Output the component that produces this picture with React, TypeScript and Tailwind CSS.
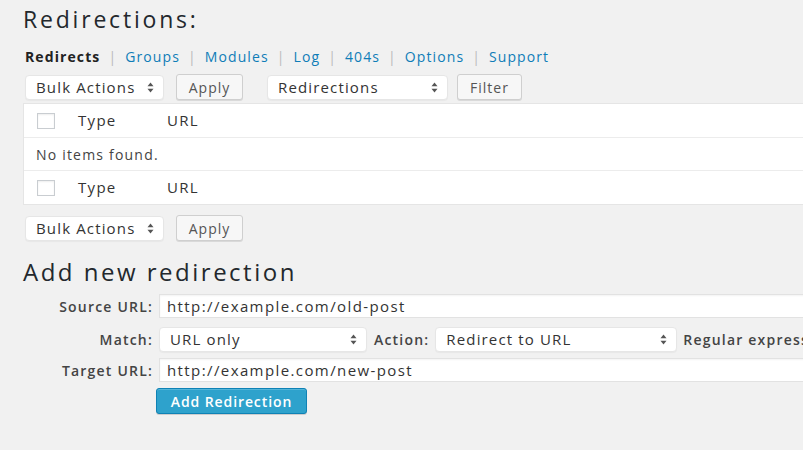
import React from 'react';

const font = { fontFamily: '"Open Sans", "Liberation Sans", sans-serif' };

function Arrows() {
    return (
        <svg width="7" height="11" viewBox="0 0 7 11" className="shrink-0">
            <path d="M3.5 0.5 L6.5 4.3 L0.5 4.3 Z" fill="#555" />
            <path d="M3.5 10.5 L6.5 6.7 L0.5 6.7 Z" fill="#555" />
        </svg>
    );
}

function FakeSelect({ label, className }: { label: string; className: string }) {
    return (
        <div className={`flex items-center justify-between h-[25px] bg-white rounded-[4px] border border-[#e6e6e6] shadow-[0_1px_1px_rgba(0,0,0,0.04)] pl-[10px] pr-[9px] text-[15px] tracking-[1.15px] text-[#333] ${className}`}>
            <span className="truncate">{label}</span>
            <Arrows />
        </div>
    );
}

function Btn({ label, className }: { label: string; className: string }) {
    return (
        <div className={`flex items-center justify-center h-[26px] bg-[#f7f7f7] border border-[#cfcfcf] rounded-[3px] shadow-[0_1px_0_#d9d9d9] text-[14px] tracking-[1px] text-[#555] ${className}`}>
            {label}
        </div>
    );
}

function HeaderRow() {
    return (
        <div className="flex items-center h-[33px] text-[15px] tracking-[1.3px] text-[#333]">
            <div className="ml-[13px] w-[18px] h-[16px] bg-white border border-[#c9cdd1] shadow-[inset_0_1px_2px_rgba(0,0,0,0.07)]" />
            <span className="ml-[23px] w-[89px]">Type</span>
            <span>URL</span>
        </div>
    );
}

function Input({ value }: { value: string }) {
    return (
        <div className="flex-1 flex items-center h-[24px] bg-white border border-[#e2e2e2] pl-[7px] text-[15px] tracking-[1.4px] text-[#333] shadow-[inset_0_1px_2px_rgba(0,0,0,0.05)]">
            {value}
        </div>
    );
}

export default function App() {
    const tabs = ['Groups', 'Modules', 'Log', '404s', 'Options', 'Support'];
    return (
        <div className="w-[803px] h-[450px] overflow-hidden bg-[#f1f1f1] text-[#333]" style={font}>
            <div className="w-[900px] pl-[23px] pt-[5px]">
                <h2 className="text-[23px] leading-[29px] tracking-[2.8px] text-[#23282d]">Redirections:</h2>

                <div className="mt-[13px] ml-[2px] flex items-center text-[14px] leading-[20px] tracking-[1.1px]">
                    <span className="font-bold text-[#222]">Redirects</span>
                    {tabs.map((t) => (
                        <React.Fragment key={t}>
                            <span className="mx-[8px] text-[#bbb]">|</span>
                            <span className="text-[#0f7db8]">{t}</span>
                        </React.Fragment>
                    ))}
                </div>

                <div className="mt-[7px] ml-[2px] flex items-center">
                    <FakeSelect label="Bulk Actions" className="w-[139px]" />
                    <Btn label="Apply" className="ml-[12px] w-[67px]" />
                    <FakeSelect label="Redirections" className="ml-[24px] w-[181px]" />
                    <Btn label="Filter" className="ml-[9px] w-[65px]" />
                </div>

                {/* Table */}
                <div className="mt-[3px] bg-white border border-[#e5e5e5]">
                    <HeaderRow />
                    <div className="flex items-center h-[34px] border-t border-b border-[#ececec] pl-[12px] text-[14px] tracking-[1.2px] text-[#444]">
                        No items found.
                    </div>
                    <HeaderRow />
                </div>

                <div className="mt-[10px] ml-[2px] flex items-center">
                    <FakeSelect label="Bulk Actions" className="w-[139px]" />
                    <Btn label="Apply" className="ml-[12px] w-[67px]" />
                </div>

                <h2 className="mt-[16px] text-[24px] leading-[29px] tracking-[2.5px] text-[#23282d]">Add new redirection</h2>

                <div className="mt-[8px] flex flex-col text-[14px] tracking-[1.2px] text-[#333]">
                    <div className="flex items-center">
                        <label className="w-[130px] text-right font-semibold text-[#444]">Source URL:</label>
                        <div className="ml-[6px] flex-1 flex">
                            <Input value="http://example.com/old-post" />
                        </div>
                    </div>
                    <div className="mt-[9px] flex items-center">
                        <label className="w-[130px] text-right font-semibold text-[#444]">Match:</label>
                        <FakeSelect label="URL only" className="ml-[6px] w-[208px]" />
                        <label className="ml-[7px] font-semibold text-[#444]">Action:</label>
                        <FakeSelect label="Redirect to URL" className="ml-[6px] w-[242px]" />
                        <span className="ml-[6px] font-semibold text-[#444] whitespace-nowrap">Regular expression:</span>
                    </div>
                    <div className="mt-[6px] flex items-center">
                        <label className="w-[130px] text-right font-semibold text-[#444]">Target URL:</label>
                        <div className="ml-[6px] flex-1 flex">
                            <Input value="http://example.com/new-post" />
                        </div>
                    </div>
                    <div className="mt-[6px] flex">
                        <div className="ml-[133px] flex items-center justify-center w-[151px] h-[26px] rounded-[3px] bg-[#2ea2cc] border border-[#0f82b5] shadow-[inset_0_1px_0_rgba(120,200,230,0.5),0_1px_0_rgba(0,0,0,0.15)] text-[14px] tracking-[0.9px] font-semibold text-white">
                            Add Redirection
                        </div>
                    </div>
                </div>
            </div>
        </div>
    );
}
